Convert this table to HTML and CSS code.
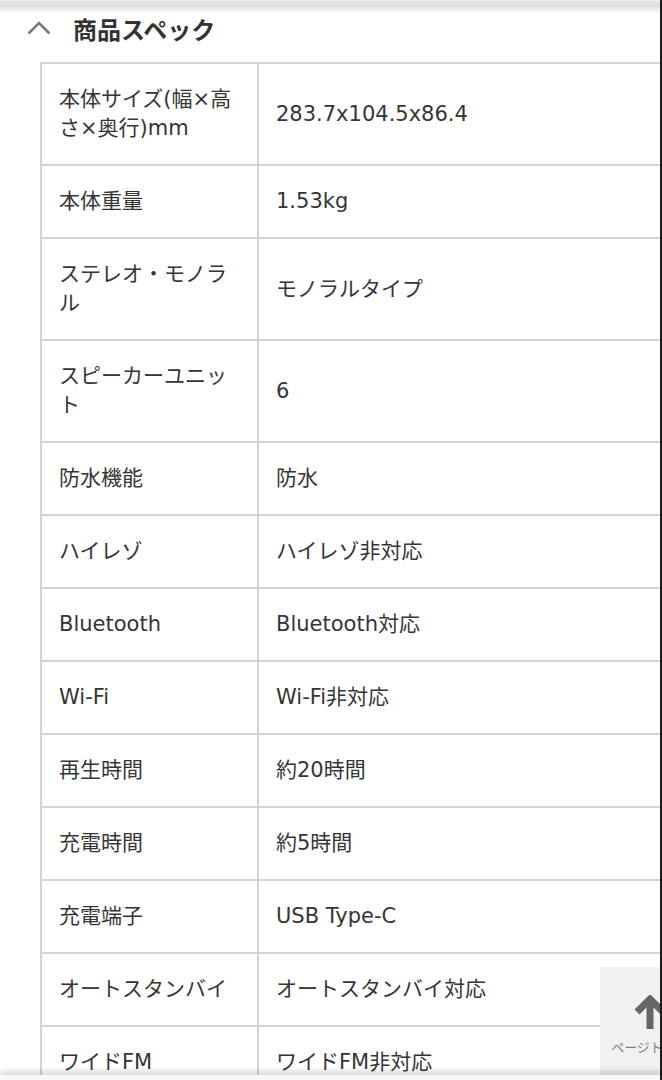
FILE: index.html
```html
<!DOCTYPE html>
<html lang="ja">
<head>
<meta charset="utf-8">
<title>商品スペック</title>
<link rel="stylesheet" href="styles.css">
</head>
<body>
<div class="top-shade"></div>
<main class="page">
  <div class="spec-head">
    <svg class="chevron" width="24" height="14" viewBox="0 0 24 14"><path d="M1.5 12.5 L12 2 L22.5 12.5" fill="none" stroke="#7a7a7a" stroke-width="2.6"/></svg>
    <h2 class="spec-title">商品スペック</h2>
  </div>
  <table class="spec-table">
    <colgroup><col class="col-key"><col class="col-val"></colgroup>
    <tbody>
      <tr><td>本体サイズ(幅×高さ×奥行)mm</td><td>283.7x104.5x86.4</td></tr>
      <tr><td>本体重量</td><td>1.53kg</td></tr>
      <tr><td>ステレオ・モノラル</td><td>モノラルタイプ</td></tr>
      <tr><td>スピーカーユニット</td><td>6</td></tr>
      <tr><td>防水機能</td><td>防水</td></tr>
      <tr><td>ハイレゾ</td><td>ハイレゾ非対応</td></tr>
      <tr><td>Bluetooth</td><td>Bluetooth対応</td></tr>
      <tr><td>Wi-Fi</td><td>Wi-Fi非対応</td></tr>
      <tr><td>再生時間</td><td>約20時間</td></tr>
      <tr><td>充電時間</td><td>約5時間</td></tr>
      <tr><td>充電端子</td><td>USB Type-C</td></tr>
      <tr><td>オートスタンバイ</td><td>オートスタンバイ対応</td></tr>
      <tr><td>ワイドFM</td><td>ワイドFM非対応</td></tr>
    </tbody>
  </table>
</main>
<a class="page-top" href="#">
  <svg class="page-top-arrow" width="32" height="34" viewBox="0 0 32 34"><path d="M16 34 V4 M3 17 L16 4 L29 17" fill="none" stroke="#666" stroke-width="7"/></svg>
  <span class="page-top-label">ページトップ</span>
</a>
<div class="right-edge"></div>
<div class="bottom-bar"></div>
</body>
</html>
```

FILE: styles.css
```css
html, body {
  margin: 0;
  padding: 0;
  overflow: hidden;
  background: #fff;
}
body {
  font-family: "DejaVu Sans", "Noto Sans CJK JP", sans-serif;
  color: #353535;
  height: 1080px;
}
.top-shade {
  position: fixed;
  top: 0;
  left: 0;
  right: 0;
  height: 15px;
  background: linear-gradient(#ececec 0, #dcdcdc 35%, #f3f3f3 70%, rgba(255,255,255,0) 100%);
  z-index: 5;
}
.page {
  padding-top: 13px;
}
.spec-head {
  display: flex;
  align-items: center;
  height: 32px;
  padding-left: 27px;
}
.chevron {
  margin-right: 22px;
  margin-top: -2px;
}
.spec-title {
  margin: 0;
  font-family: "Noto Sans CJK JP", sans-serif;
  font-size: 24px;
  font-weight: 700;
  line-height: 32px;
  color: #333;
}
.spec-table {
  margin: 17px 0 0 40px;
  border-collapse: collapse;
  table-layout: fixed;
  width: 660px;
  font-size: 21px;
  line-height: 29px;
}
.col-key { width: 217px; }
.spec-table td {
  border: 2px solid #d3d3d3;
  padding: 21px 17px;
  vertical-align: middle;
}
.page-top {
  position: fixed;
  left: 600px;
  top: 967px;
  width: 100px;
  height: 113px;
  background: #f1f1f1;
  display: flex;
  flex-direction: column;
  align-items: center;
  text-decoration: none;
  z-index: 4;
}
.page-top-arrow {
  margin-top: 28px;
}
.page-top-label {
  margin-top: 10px;
  font-family: "Noto Sans CJK JP", sans-serif;
  font-size: 13px;
  color: #808080;
  line-height: 16px;
}
.right-edge {
  position: fixed;
  top: 0;
  bottom: 0;
  right: 0;
  width: 2px;
  background: #1c1c1c;
  z-index: 6;
}
.bottom-bar {
  position: fixed;
  left: 0;
  right: 0;
  bottom: 0;
  height: 5px;
  background: #f8f8f8;
  box-shadow: 0 -3px 6px rgba(0,0,0,0.22);
  z-index: 5;
}
```
